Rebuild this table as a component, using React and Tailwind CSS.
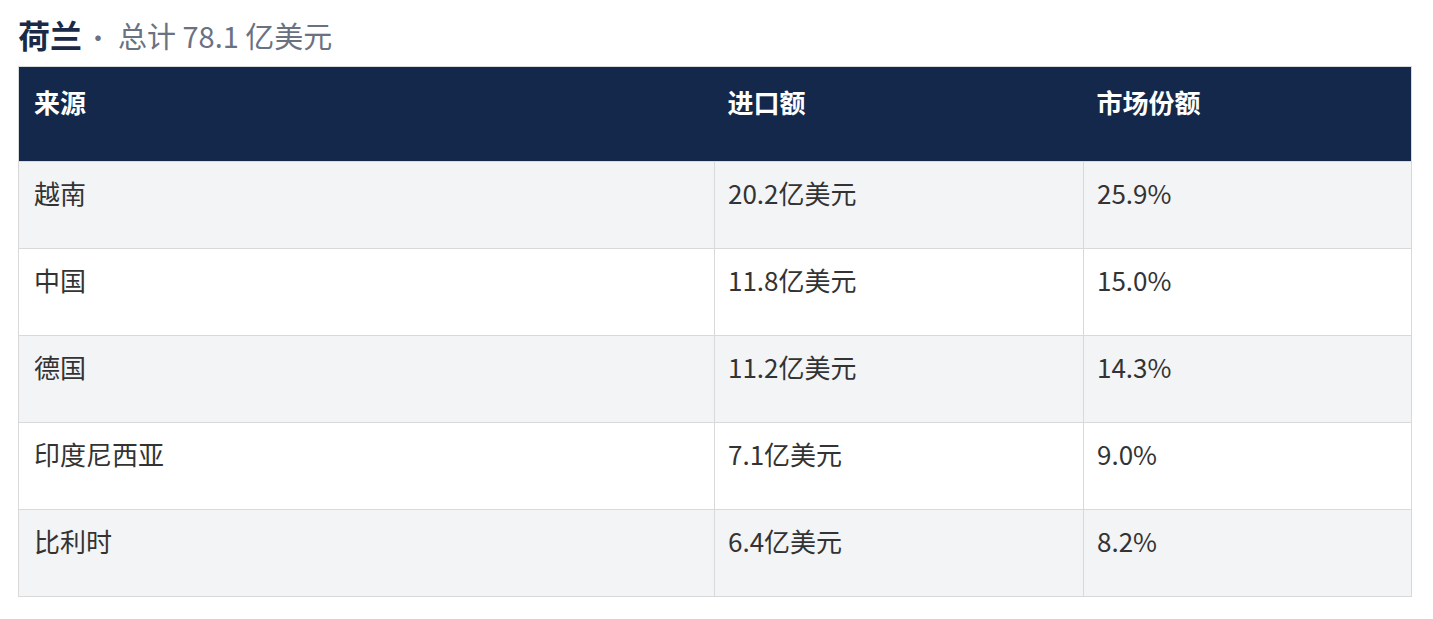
const rows = [
  { source: "越南", value: "20.2亿美元", share: "25.9%" },
  { source: "中国", value: "11.8亿美元", share: "15.0%" },
  { source: "德国", value: "11.2亿美元", share: "14.3%" },
  { source: "印度尼西亚", value: "7.1亿美元", share: "9.0%" },
  { source: "比利时", value: "6.4亿美元", share: "8.2%" },
];

export default function App() {
  return (
    <div
      className="min-h-screen bg-white px-[18px] pt-[15px]"
      style={{ fontFamily: "'Noto Sans CJK SC', 'Noto Sans', sans-serif" }}
    >
      <div className="mb-[10px] flex items-baseline leading-[38px]">
        <span className="text-[32px] font-bold text-[#1b2a47]">荷兰</span>
        <span className="ml-[3px] mr-[7px] text-[26px] text-gray-500">·</span>
        <span className="text-[29px] text-gray-500">总计 78.1 亿美元</span>
      </div>

      <table className="w-[1393px] table-fixed border-collapse border border-[#d9d9d9] text-[26px]">
        <colgroup>
          <col className="w-[696px]" />
          <col className="w-[369px]" />
          <col className="w-[328px]" />
        </colgroup>
        <thead>
          <tr className="h-[95px] bg-[#14284b] text-left text-white">
            <th className="pl-[15px] pr-4 pt-[15px] align-top font-bold leading-[39px]">来源</th>
            <th className="pl-[13px] pr-4 pt-[15px] align-top font-bold leading-[39px]">进口额</th>
            <th className="pl-[13px] pr-4 pt-[15px] align-top font-bold leading-[39px]">市场份额</th>
          </tr>
        </thead>
        <tbody className="text-[#333]">
          {rows.map((r, i) => (
            <tr key={r.source} className={`h-[87px] ${i % 2 === 0 ? "bg-[#f3f4f6]" : "bg-white"}`}>
              <td className="border border-[#d9d9d9] pl-[15px] pr-4 pt-[11px] align-top leading-[39px]">{r.source}</td>
              <td className="border border-[#d9d9d9] pl-[13px] pr-4 pt-[11px] align-top leading-[39px]">{r.value}</td>
              <td className="border border-[#d9d9d9] pl-[13px] pr-4 pt-[11px] align-top leading-[39px]">{r.share}</td>
            </tr>
          ))}
        </tbody>
      </table>
    </div>
  );
}
